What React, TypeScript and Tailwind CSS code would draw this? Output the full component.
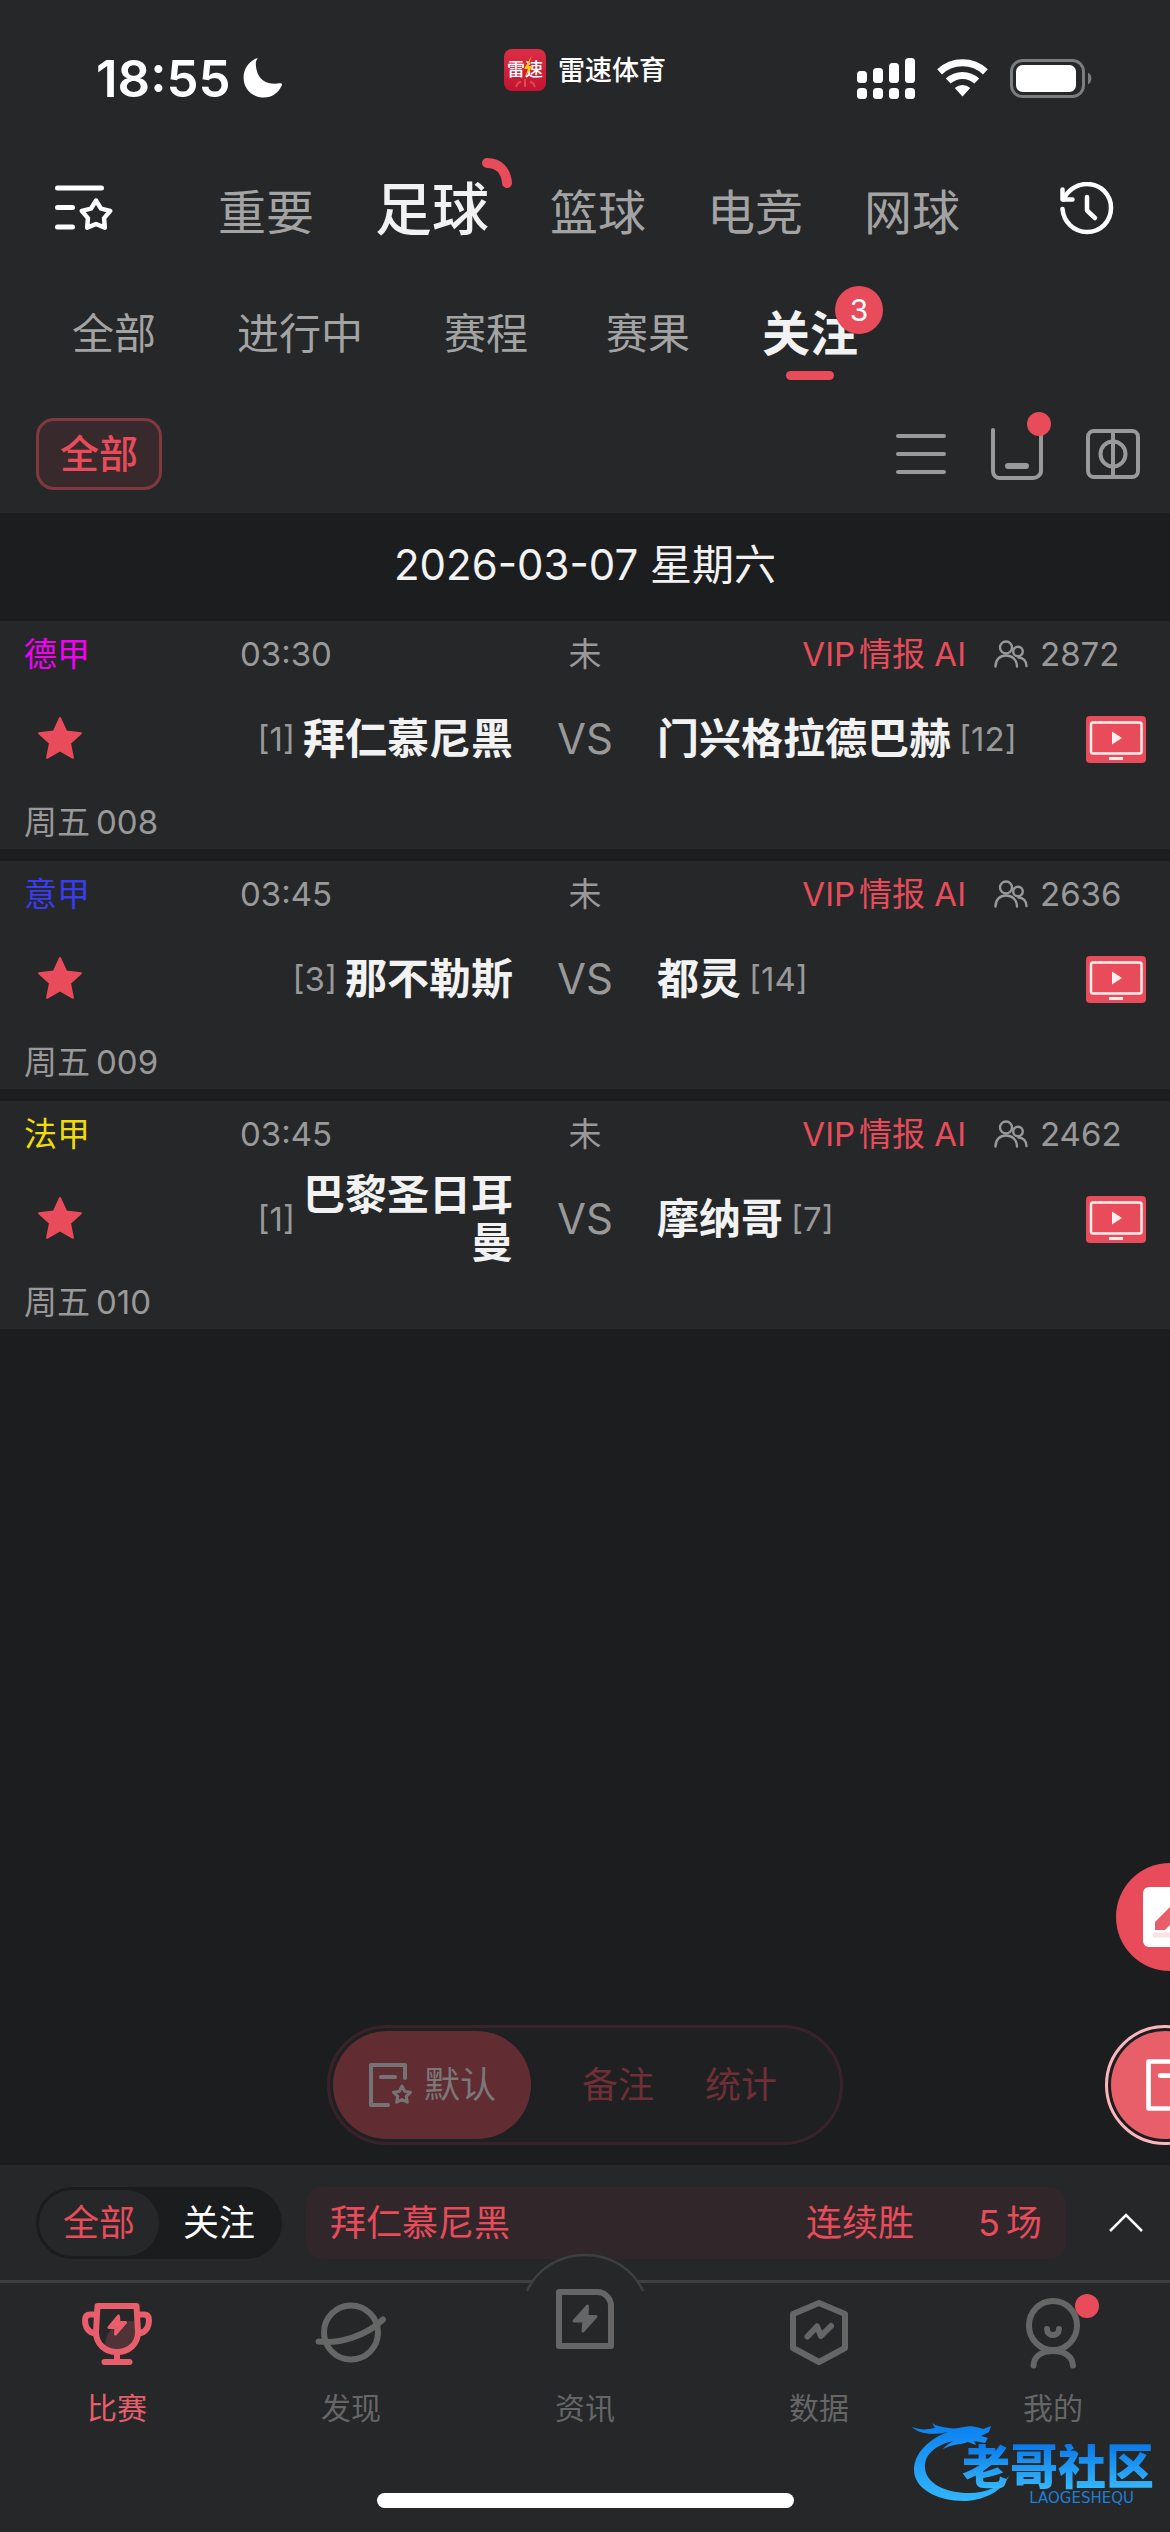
import React, { useState } from 'react';
import clsx from 'clsx';

interface Team {
  name: string;
  rank: number;
}

interface Match {
  id: string;
  league: string;
  leagueColor: string;
  time: string;
  home: Team;
  away: Team;
  viewers: number;
}

const SPORTS = ['重要', '足球', '篮球', '电竞', '网球'];

const FILTERS = ['全部', '进行中', '赛程', '赛果', '关注'];

const MATCHES: Match[] = [
  {
    id: '008',
    league: '德甲',
    leagueColor: 'text-[#f400f4]',
    time: '03:30',
    home: { name: '拜仁慕尼黑', rank: 1 },
    away: { name: '门兴格拉德巴赫', rank: 12 },
    viewers: 2872,
  },
  {
    id: '009',
    league: '意甲',
    leagueColor: 'text-[#3a3cf0]',
    time: '03:45',
    home: { name: '那不勒斯', rank: 3 },
    away: { name: '都灵', rank: 14 },
    viewers: 2636,
  },
  {
    id: '010',
    league: '法甲',
    leagueColor: 'text-[#f0dc0a]',
    time: '03:45',
    home: { name: '巴黎圣日耳曼', rank: 1 },
    away: { name: '摩纳哥', rank: 7 },
    viewers: 2462,
  },
];

function starPoints(cx: number, cy: number, outer: number, inner: number) {
  return Array.from({ length: 10 }, (_, i) => {
    const radius = i % 2 === 0 ? outer : inner;
    const angle = (Math.PI / 5) * i - Math.PI / 2;
    return `${cx + radius * Math.cos(angle)},${cy + radius * Math.sin(angle)}`;
  }).join(' ');
}

/* Status bar icons */

function SignalIcon() {
  const heights = [12, 15, 20, 25];
  return (
    <svg width="58" height="41" viewBox="0 0 58 41" fill="#fff">
      {heights.map((h, i) => (
        <g key={h}>
          <rect x={i * 16} y={25 - h} width="10" height={h} rx="3.5" />
          <rect x={i * 16} y="30" width="10" height="11" rx="3.5" />
        </g>
      ))}
    </svg>
  );
}

function WifiIcon() {
  return (
    <svg width="51" height="38" viewBox="0 0 51 38" fill="none">
      <path d="M2.6 12.9A33.5 33.5 0 0 1 48.4 12.9" stroke="#fff" strokeWidth="7" />
      <path d="M11.2 22A21 21 0 0 1 39.8 22" stroke="#fff" strokeWidth="7" />
      <path d="M25.5 37.5L17.8 29A11.5 11.5 0 0 1 33.2 29Z" fill="#fff" />
    </svg>
  );
}

function BatteryIcon() {
  return (
    <svg width="82" height="39" viewBox="0 0 82 39">
      <rect x="1.5" y="1.5" width="72" height="36" rx="11" fill="none" stroke="#7c7d7e" strokeWidth="3" />
      <rect x="6" y="6" width="60" height="27" rx="6.5" fill="#fff" />
      <path d="M78 13.5C82.5 16 82.5 23 78 25.5Z" fill="#7c7d7e" />
    </svg>
  );
}

function MoonIcon() {
  return (
    <svg width="40" height="40" viewBox="0 0 40 40">
      <path
        d="M14.5 .7C12 3 12.5 9 14.5 15C18 23.5 26 27 36.500 25.2C38.6 24.9 39.5 25.8 38.8 27.5C35.5 34.8 29 39.5 21 39.5C9.3 39.5 .6 31 .6 19.5C.6 11 5.5 4 12.3 .7C13.6 0 15.3 0 14.5 .7Z"
        fill="#fff"
      />
    </svg>
  );
}

/* Header icons */

function ListStarIcon() {
  return (
    <svg
      width="60"
      height="48"
      viewBox="0 0 60 48"
      fill="none"
      stroke="#fff"
      strokeWidth="5"
      strokeLinecap="round"
      strokeLinejoin="round"
    >
      <path d="M3.5 3H47.5M3.5 22.5H18.5M3.5 42H18.5" />
      <polygon points={starPoints(42, 30.5, 15, 8.5)} strokeWidth="4.5" />
    </svg>
  );
}

function HistoryIcon() {
  return (
    <svg
      width="54"
      height="54"
      viewBox="0 1 54 54"
      fill="none"
      stroke="#fff"
      strokeWidth="4.5"
      strokeLinecap="round"
      strokeLinejoin="round"
    >
      <path d="M2.5 28C3.5 41 14 51 27 51C40.5 51 51 40.5 51 27S40.5 3 27 3C16.5 3 7.5 9.5 3.5 18.5" />
      <path d="M2.5 8.5V18.5H12.5" />
      <path d="M27 16V29.5L35 37" />
    </svg>
  );
}

function MenuIcon() {
  return (
    <svg width="60" height="60" viewBox="0 0 60 60" stroke="#9a9a9a" strokeWidth="4" strokeLinecap="round">
      <path d="M7 12H53M7 30H53M7 48H53" />
    </svg>
  );
}

function TrayIcon() {
  return (
    <svg width="60" height="60" viewBox="0 0 60 60" fill="none" stroke="#9a9a9a" strokeLinecap="round">
      <path d="M6 6V47C6 51 9 54 13 54H46C50 54 54 51 54 47V6" strokeWidth="4" />
      <path d="M21 42H39" strokeWidth="6" />
    </svg>
  );
}

function PitchIcon() {
  return (
    <svg width="60" height="60" viewBox="0 0 60 60" fill="none" stroke="#9a9a9a" strokeWidth="4">
      <rect x="5" y="7" width="50" height="46" rx="6" />
      <circle cx="30" cy="30" r="12.5" />
      <path d="M30 7V53" />
    </svg>
  );
}

/* Match row icons */

function StarIcon() {
  return (
    <svg width="48" height="48" viewBox="0 0 48 48">
      <polygon
        points={starPoints(24, 25, 22, 10.5)}
        fill="#e84c5b"
        stroke="#e84c5b"
        strokeWidth="2"
        strokeLinejoin="round"
      />
    </svg>
  );
}

function ViewersIcon() {
  return (
    <svg
      width="34"
      height="28"
      viewBox="0 0 34 28"
      fill="none"
      stroke="#999"
      strokeWidth="2.4"
      strokeLinecap="round"
    >
      <circle cx="12" cy="7.5" r="6" />
      <path d="M1.5 26.5C1.5 19.5 6 15.5 12 15.5S23 19.500 23 26.5" />
      <circle cx="24" cy="11.5" r="4.8" />
      <path d="M24.5 17.5C29 17.5 32.5 21 32.5 26" />
    </svg>
  );
}

function TvIcon() {
  return (
    <svg width="60" height="47" viewBox="0 0 60 47">
      <rect width="60" height="47" rx="4" fill="#e84c5b" />
      <rect x="5" y="6.5" width="50.5" height="31" rx="2" fill="none" stroke="#fdeeee" strokeWidth="2.5" />
      <path d="M26 15.5L36 22L26 28.5Z" fill="#fdeeee" />
      <rect x="23" y="41" width="14" height="3" fill="#fdeeee" />
    </svg>
  );
}

/* Shared by the note switch and the floating button */
function NoteStarIcon({ size, color }: { size: number; color: string }) {
  return (
    <svg
      width={size}
      height={size}
      viewBox="0 0 46 46"
      fill="none"
      stroke={color}
      strokeWidth="4"
      strokeLinecap="round"
      strokeLinejoin="round"
    >
      <path d="M37 16V3H3V43H20" />
      <path d="M13 15H27" />
      <polygon points={starPoints(34, 33, 9, 4.5)} strokeWidth="3" />
    </svg>
  );
}

function EditIcon() {
  return (
    <svg width="60" height="60" viewBox="0 0 60 60">
      <rect width="60" height="60" rx="6" fill="#fff" />
      <path d="M12 35L37 10L46 19L22 43H12Z" fill="#e85e6b" />
      <path d="M12 48H48" stroke="#ffe0e3" strokeWidth="5" strokeLinecap="round" />
    </svg>
  );
}

/* Tab bar icons */

const tabIconProps = {
  width: 72,
  height: 72,
  viewBox: '0 0 72 72',
  fill: 'none',
  stroke: 'currentColor',
  strokeWidth: 6,
  strokeLinecap: 'round' as const,
  strokeLinejoin: 'round' as const,
};

function TrophyIcon() {
  return (
    <svg {...tabIconProps}>
      <path
        d="M57 23H50C34 24 24 34 24 48C28 52 32 54 36 54C47 54 57 46 57 34Z"
        fill="currentColor"
        fillOpacity=".22"
        stroke="none"
      />
      <path d="M16.5 8H55.5L57 34C57 46 48 54 36 54S15 46 15 34Z" />
      <path d="M14 16.5H9C5.5 16.5 4 18.5 4 22C4 29.5 7.5 34.5 14 35.5M58 16.5H63C66.5 16.5 68 18.5 68 22C68 29.5 64.5 34.5 58 35.5" />
      <path d="M36 55V64M23.5 64H48.5" />
      <path d="M37.5 18L28 29.5H35L34.5 36L44.5 24.5H38Z" fill="currentColor" strokeWidth="3" />
    </svg>
  );
}

function PlanetIcon() {
  return (
    <svg {...tabIconProps}>
      <circle cx="36" cy="34.5" r="27" />
      <path d="M3.5 43.5C25 46 51 38 68 21.5" />
    </svg>
  );
}

function NewsIcon() {
  return (
    <svg {...tabIconProps}>
      <path d="M10 6H48A14 14 0 0 1 62 20V60H10Z" />
      <path d="M38.5 20L25 35H35L34 45L47 30.5H38Z" fill="currentColor" strokeWidth="3" />
    </svg>
  );
}

function DataIcon() {
  return (
    <svg {...tabIconProps}>
      <path d="M36 5L62 16V50L36 64L10 50V16Z" />
      <path d="M24.5 38.5L34 28.5L38 38L48 28" />
    </svg>
  );
}

function ProfileIcon() {
  return (
    <svg {...tabIconProps}>
      <ellipse cx="36" cy="27.5" rx="24" ry="24.5" />
      <path d="M30 31C30 39 42 39 42 31" />
      <path d="M16.5 67.5C17 58 25 53 36 53S55.5 58 56 67.5" />
    </svg>
  );
}

const TABS = [
  { label: '比赛', icon: TrophyIcon },
  { label: '发现', icon: PlanetIcon },
  { label: '资讯', icon: NewsIcon },
  { label: '数据', icon: DataIcon },
  { label: '我的', icon: ProfileIcon },
];

function StatusBar() {
  return (
    <div className="grid h-36 grid-cols-3 items-center pt-3">
      <div className="flex items-center gap-3 pl-24 text-white">
        <span className="text-[51px] leading-none font-semibold">18:55</span>
        <MoonIcon />
      </div>
      <div className="flex items-center justify-center gap-3 pb-4">
        <span className="relative flex size-[42px] items-center justify-center rounded-lg bg-linear-to-b from-[#dc2d45] to-[#c41230] text-[18px] leading-none font-medium whitespace-nowrap text-white">
          雷速
          <svg className="absolute inset-0" width="42" height="42" viewBox="0 0 42 42">
            <path d="M27.5 7L20 20H24L20.5 29L28.5 17H24.5Z" fill="#f7c815" />
            <path
              d="M12 38C13 35 15 33 17 33M21 30V38M31 38C30 35 28 33 26 33"
              stroke="#d94a5c"
              fill="none"
              strokeWidth="2"
            />
          </svg>
        </span>
        <span className="text-[27px] leading-none font-medium text-white">雷速体育</span>
      </div>
      <div className="flex items-center justify-end gap-[22px] pr-[78px]">
        <SignalIcon />
        <WifiIcon />
        <BatteryIcon />
      </div>
    </div>
  );
}

function MatchRow({ match }: { match: Match }) {
  return (
    <li className="bg-[#252729] text-[33px] leading-none text-[#999]">
      <div className="grid h-[66px] grid-cols-[1fr_auto_1fr] items-center px-6">
        <div className="flex">
          <span className={clsx('w-[216px]', match.leagueColor)}>{match.league}</span>
          <time>{match.time}</time>
        </div>
        <span>未</span>
        <div className="flex items-center justify-end pr-6">
          <span className="flex gap-1 text-[#e84c5b]">
            <span>VIP</span>
            <span>情报 AI</span>
          </span>
          <span className="ml-7">
            <ViewersIcon />
          </span>
          <span className="ml-3 w-[82px]">{match.viewers}</span>
        </div>
      </div>
      <div className="grid h-[104px] grid-cols-[1fr_144px_1fr] items-center">
        <div className="flex items-center pl-9">
          <button type="button" aria-label="取消关注">
            <StarIcon />
          </button>
          <span className="ml-auto pr-2">[{match.home.rank}]</span>
          <span className="max-w-[210px] text-right text-[42px] leading-12 font-semibold text-[#f2f2f2]">
            {match.home.name}
          </span>
        </div>
        <span className="text-center text-[42px]">VS</span>
        <div className="flex items-center pr-6">
          <span className="text-[42px] leading-12 font-semibold whitespace-nowrap text-[#f2f2f2]">
            {match.away.name}
          </span>
          <span className="pl-2">[{match.away.rank}]</span>
          <button type="button" aria-label="视频直播" className="ml-auto">
            <TvIcon />
          </button>
        </div>
      </div>
      <div className="flex h-[58px] items-center gap-1.5 px-6 pt-1">
        <span>周五</span>
        <span>{match.id}</span>
      </div>
    </li>
  );
}

function Watermark() {
  return (
    <div className="absolute right-4 bottom-6 h-[96px] w-[246px]">
      <svg className="absolute inset-0" width="246" height="96" viewBox="0 0 246 96">
        <defs>
          <linearGradient id="dragon" x1="0" y1="0" x2="0" y2="1">
            <stop offset="0" stopColor="#0a7ff0" />
            <stop offset="1" stopColor="#33b6fb" />
          </linearGradient>
        </defs>
        <path
          d="M40 20C20 27 6 42 6 58C6 76 28 89 57 89C78 88 95 78 101 64C93 74 79 81 61 81C37 81 18 71 17 56C16 44 25 34 45 29C41 32 38 33 35 37C44 32 52 33 60 30L68 33L66 29L77 31L80 26L73 24L81 20L83 14L75 17C70 15 63 13 56 15C50 16 46 17 41 16C34 15 28 14 24 11L27 16C18 18 12 18 4 15C10 21 22 24 40 20Z"
          fill="url(#dragon)"
        />
      </svg>
      <div className="relative flex flex-col items-end pt-8">
        <span className="bg-linear-to-b from-[#0a78e8] to-[#37b8fa] bg-clip-text text-[48px] leading-[46px] font-black text-transparent">
          老哥社区
        </span>
        <span className="pr-5 font-['DejaVu_Sans'] text-[15px] leading-4 text-[#1f7fd6]">LAOGESHEQU</span>
      </div>
    </div>
  );
}

export default function App() {
  const [sport, setSport] = useState('足球');
  const [filter, setFilter] = useState('关注');
  const [tab, setTab] = useState('比赛');

  return (
    <div className="flex min-h-screen w-full flex-col overflow-hidden bg-[#1c1d1f] font-['Inter','Noto_Sans_CJK_SC',sans-serif]">
      <header className="bg-[#252729]">
        <StatusBar />

        <div className="flex h-[130px] items-center pr-14 pl-[54px]">
          <button type="button" aria-label="关注列表">
            <ListStarIcon />
          </button>
          <nav className="ml-[104px] flex items-baseline gap-[61px]">
            {SPORTS.map((name) => (
              <button
                key={name}
                type="button"
                onClick={() => setSport(name)}
                className={clsx(
                  'relative leading-none whitespace-nowrap',
                  name === sport ? 'text-[57px] font-medium text-[#f2f2f2]' : 'text-[48px] text-[#a3a3a3]'
                )}
              >
                {name}
                {name === sport && (
                  <svg className="absolute -top-6 -right-6" width="32" height="32" viewBox="0 0 32 32" fill="none">
                    <path d="M6 6C18 6 25 14 26 26" stroke="#e84c5b" strokeWidth="10" strokeLinecap="round" />
                  </svg>
                )}
              </button>
            ))}
          </nav>
          <button type="button" aria-label="历史" className="ml-auto">
            <HistoryIcon />
          </button>
        </div>

        <nav className="flex h-[120px] items-stretch px-[33px]">
          {FILTERS.map((name) => (
            <button
              key={name}
              type="button"
              onClick={() => setFilter(name)}
              className={clsx(
                'relative leading-none whitespace-nowrap',
                name.length > 2 ? 'w-[210px]' : 'w-[162px]',
                name === filter ? 'text-[48px] font-semibold text-[#f2f2f2]' : 'text-[42px] text-[#a3a3a3]'
              )}
            >
              {name}
              {name === filter && (
                <span className="absolute bottom-[14px] left-1/2 h-[9px] w-12 -translate-x-1/2 rounded-full bg-[#e84c5b]" />
              )}
              {name === '关注' && (
                <span className="absolute top-3 right-2 flex size-12 items-center justify-center rounded-full bg-[#e84c5b] text-[30px] font-normal text-white">
                  3
                </span>
              )}
            </button>
          ))}
        </nav>

        <div className="flex h-[119px] items-center pr-[27px] pl-9">
          <button
            type="button"
            className="h-[72px] w-[126px] rounded-[18px] border-3 border-[#81383f] bg-[#38292c] text-[39px] leading-none font-medium text-[#e84c5b]"
          >
            全部
          </button>
          <div className="ml-auto flex items-center gap-9">
            <button type="button" aria-label="菜单">
              <MenuIcon />
            </button>
            <button type="button" aria-label="收纳" className="relative">
              <TrayIcon />
              <span className="absolute -top-3 -right-1 size-6 rounded-full bg-[#e84c5b]" />
            </button>
            <button type="button" aria-label="球场">
              <PitchIcon />
            </button>
          </div>
        </div>
      </header>

      <main className="relative flex-1">
        <h2 className="flex h-[108px] items-center justify-center pb-1 text-[42px] leading-none text-[#f2f2f2]">
          2026-03-07 星期六
        </h2>
        <ul className="flex flex-col gap-3">
          {MATCHES.map((match) => (
            <MatchRow key={match.id} match={match} />
          ))}
        </ul>

        <div className="absolute bottom-5 left-1/2 flex h-[120px] w-[516px] -translate-x-1/2 items-center rounded-full border-3 border-[#3a2328] bg-[#1f2022] pl-[3px] text-[36px] leading-none text-[#702e36]">
          <button
            type="button"
            className="flex h-[108px] w-[198px] items-center justify-center gap-2.5 rounded-full bg-[#622c33] text-[#7b7878]"
          >
            <NoteStarIcon size={46} color="#757475" />
            默认
          </button>
          <button type="button" className="ml-[51px]">
            备注
          </button>
          <button type="button" className="ml-[51px]">
            统计
          </button>
        </div>

        <div className="absolute right-0 bottom-5 flex w-[65px] flex-col items-start gap-[54px] overflow-hidden">
          <button
            type="button"
            aria-label="发布"
            className="ml-[11px] flex size-[108px] shrink-0 items-center rounded-full bg-[#e84c5b] pl-[27px]"
          >
            <EditIcon />
          </button>
          <button
            type="button"
            aria-label="笔记"
            className="size-[120px] shrink-0 rounded-full border-3 border-[#fbb6bd] p-[3px]"
          >
            <span className="flex size-full items-center rounded-full bg-[#e85e69] pl-[34px]">
              <NoteStarIcon size={54} color="#fff" />
            </span>
          </button>
        </div>
      </main>

      <footer className="relative bg-[#252729]">
        <div className="flex h-[115px] items-center pr-6 pl-9 text-[36px] leading-none">
          <div className="flex h-[72px] w-[246px] shrink-0 items-center rounded-full bg-[#1b1c1e] p-[3px]">
            <button type="button" className="h-full flex-1 rounded-full bg-[#252729] text-[#e84c5b]">
              全部
            </button>
            <button type="button" className="h-full flex-1 text-white">
              关注
            </button>
          </div>
          <div className="ml-6 flex h-[72px] flex-1 items-center rounded-2xl bg-[#31272a] px-6 text-[#e84c5b]">
            <span className="mr-auto">拜仁慕尼黑</span>
            <span>连续胜</span>
            <span className="ml-16 flex gap-1.5">
              <span>5</span>
              <span>场</span>
            </span>
          </div>
          <button type="button" aria-label="展开" className="ml-10">
            <svg width="40" height="40" viewBox="0 0 40 40" fill="none" stroke="#fff" strokeWidth="2.5">
              <path d="M4 28L20 12L36 28" />
            </svg>
          </button>
        </div>

        <nav className="relative grid grid-cols-5 border-t-3 border-[#3e3f41]">
          {/* raised bump behind the middle tab */}
          <svg className="absolute -top-[30px] left-1/2 -translate-x-1/2" width="120" height="44" viewBox="0 0 120 44">
            <path d="M2 38C12 16 34 2 60 2S108 16 118 38V44H2Z" fill="#252729" />
            <path d="M2 38C12 16 34 2 60 2S108 16 118 38" fill="none" stroke="#3e3f41" strokeWidth="2.5" />
          </svg>
          {TABS.map(({ label, icon: Icon }) => (
            <button
              key={label}
              type="button"
              onClick={() => setTab(label)}
              className={clsx(
                'relative flex h-[142px] flex-col items-center justify-between pb-0.5 text-[30px] leading-none',
                label === '资讯' ? 'pt-[3px]' : 'pt-[15px]',
                label === tab ? 'text-[#e85e6b]' : 'text-[#666]'
              )}
            >
              <span className="relative">
                <Icon />
                {label === '我的' && (
                  <span className="absolute -top-1 -right-2.5 size-6 rounded-full bg-[#e84c5b]" />
                )}
              </span>
              {label}
            </button>
          ))}
        </nav>

        <div className="flex h-[107px] items-end justify-center pb-6">
          <div className="h-[15px] w-[417px] rounded-full bg-white" />
        </div>

        <Watermark />
      </footer>
    </div>
  );
}
